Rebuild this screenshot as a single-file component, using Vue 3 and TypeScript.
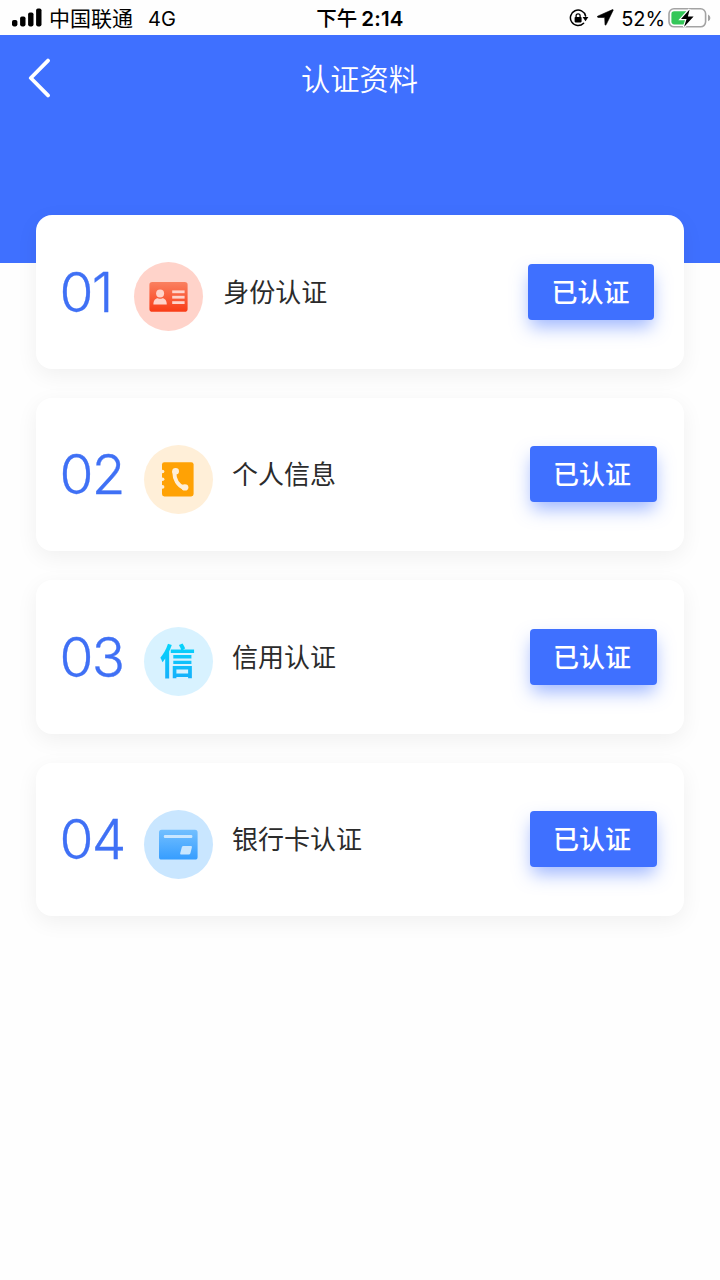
<script setup lang="ts">
type IconKind = 'identity' | 'contacts' | 'credit' | 'bank'

interface Step {
  no: string
  icon: IconKind
  label: string
  status: string
}

const steps: Step[] = [
  { no: '01', icon: 'identity', label: '身份认证', status: '已认证' },
  { no: '02', icon: 'contacts', label: '个人信息', status: '已认证' },
  { no: '03', icon: 'credit', label: '信用认证', status: '已认证' },
  { no: '04', icon: 'bank', label: '银行卡认证', status: '已认证' },
]
</script>

<template>
  <div class="screen">
    <div class="status-bar">
      <div class="side">
        <svg class="signal" width="31" height="20" viewBox="0 0 31 20">
          <rect x="0" y="12" width="5.4" height="6.4" rx="1.8" />
          <rect x="8.1" y="8.4" width="5.4" height="10" rx="1.8" />
          <rect x="16.1" y="4.4" width="5.4" height="14" rx="1.8" />
          <rect x="24.1" y="0.4" width="5.4" height="18" rx="1.8" />
        </svg>
        <span class="carrier">中国联通</span>
        <span class="network">4G</span>
      </div>
      <div class="clock"><span class="period">下午</span><span class="time">2:14</span></div>
      <div class="side side-right">
        <svg class="lock" width="20" height="20" viewBox="0 0 20 20">
          <path d="M14.6 15.2A7.7 7.7 0 1 1 16.6 8" fill="none" stroke="#000" stroke-width="1.5" stroke-linecap="round" />
          <path d="M13.6 9h5.8l-2.9 4.2z" />
          <rect x="5.6" y="9" width="7" height="5.4" rx="0.8" />
          <path d="M7.1 9.4V7.8a2 2 0 0 1 4 0V9.4" fill="none" stroke="#000" stroke-width="1.3" />
        </svg>
        <svg class="arrow" width="17" height="17" viewBox="0 0 17 17">
          <path d="M15.6 0.6 L0.6 7.2 Q-0.1 8.1 1 8.4 L7.7 8.6 L8 15.5 Q8.5 16.8 9.2 15.6 L16.2 1.2 Q16.3 0.5 15.6 0.6z" stroke="#000" stroke-width="0.6" stroke-linejoin="round" />
        </svg>
        <span class="percent">52%</span>
        <svg class="battery" width="43" height="22" viewBox="0 0 43 22">
          <rect x="1" y="1.8" width="36.6" height="18" rx="5" fill="none" stroke="#a3a3a3" stroke-width="1.6" />
          <path d="M40 7.6v6.6q2.4-1.1 2.4-3.3T40 7.6z" fill="#a3a3a3" />
          <rect x="3.4" y="4.2" width="17" height="13.2" rx="2.8" fill="#34c759" />
          <path d="M21.6 2.4 L13 12h5.6L16 20 L25.6 9.6h-5.7z" fill="#000" stroke="#fff" stroke-width="2.4" paint-order="stroke" />
        </svg>
      </div>
    </div>

    <header class="header">
      <svg class="back" width="24" height="40" viewBox="0 0 24 40">
        <path d="M21 2.6 L3.8 20 L21 37.4" fill="none" stroke="#fff" stroke-width="3.8" stroke-linecap="round" stroke-linejoin="round" />
      </svg>
      <h1 class="title">认证资料</h1>
      <span class="header-spacer"></span>
    </header>

    <main class="cards">
      <section v-for="(s, i) in steps" :key="s.no" class="card" :class="{ first: i === 0 }">
        <span class="number">{{ s.no }}</span>
        <div class="icon" :class="s.icon">
          <svg v-if="s.icon === 'identity'" width="69" height="69" viewBox="0 0 69 69">
            <defs>
              <linearGradient id="idFill" x1="0" y1="0" x2="0" y2="1">
                <stop offset="0" stop-color="#fa8060" />
                <stop offset="1" stop-color="#f93c16" />
              </linearGradient>
            </defs>
            <rect x="15.4" y="20.1" width="38.2" height="29.6" rx="2.8" fill="url(#idFill)" />
            <g fill="#ffd3ca">
              <circle cx="26.1" cy="31.4" r="4" />
              <path d="M19.4 42.6c0-4.2 2-6.3 4.4-6.3q2.3 1 4.6 0c2.4 0 4.4 2.1 4.4 6.3z" />
              <rect x="38.2" y="28.4" width="12.4" height="2.8" />
              <rect x="38.2" y="33.8" width="12.4" height="2.8" />
              <rect x="38.2" y="39.2" width="12.4" height="2.8" />
            </g>
          </svg>
          <svg v-else-if="s.icon === 'contacts'" width="69" height="69" viewBox="0 0 69 69">
            <rect x="18" y="17.2" width="31.6" height="34.2" rx="2.4" fill="#ffa205" />
            <g fill="#ffefd8">
              <circle cx="18.6" cy="26.5" r="1.8" />
              <circle cx="18.6" cy="34.2" r="1.8" />
              <circle cx="18.6" cy="41.9" r="1.8" />
            </g>
            <path d="M30.3 27C30.3 34.5 34 40.8 40.5 43" fill="none" stroke="#ffefd8" stroke-width="4" stroke-linecap="round" />
            <ellipse cx="31.6" cy="26.3" rx="3.4" ry="3.2" fill="#ffefd8" />
            <ellipse cx="40.9" cy="42.4" rx="3.5" ry="3.1" fill="#ffefd8" />
          </svg>
          <span v-else-if="s.icon === 'credit'" class="credit-char">信</span>
          <svg v-else width="69" height="69" viewBox="0 0 69 69">
            <defs>
              <linearGradient id="bankFill" x1="0" y1="0" x2="0" y2="1">
                <stop offset="0" stop-color="#72bfff" />
                <stop offset="1" stop-color="#369dff" />
              </linearGradient>
            </defs>
            <rect x="15" y="19.8" width="38.6" height="29.8" rx="2.6" fill="url(#bankFill)" />
            <rect x="19.8" y="25.1" width="28.6" height="2.9" rx="1.2" fill="#c9e6ff" />
            <path d="M39.4 36h7.6q1.2 0 .9 1.2l-1.5 6.1q-.4 1.3-1.7 1.3h-7.6q-1.3 0-.9-1.3l1.6-6.1q.4-1.2 1.6-1.2z" fill="#c9e6ff" />
          </svg>
        </div>
        <span class="label">{{ s.label }}</span>
        <button class="status" type="button">{{ s.status }}</button>
      </section>
    </main>
  </div>
</template>

<style>
body {
  background: #fefefe;
}
</style>

<style scoped>
.screen {
  box-sizing: border-box;
  width: 720px;
  height: 1280px;
  overflow: hidden;
  background: #fefefe;
  font-family: "Inter", "Noto Sans CJK SC", sans-serif;
}
.status-bar {
  display: grid;
  grid-template-columns: 1fr auto 1fr;
  align-items: center;
  height: 35px;
  color: #000;
}
.side {
  display: flex;
  align-items: center;
  height: 35px;
}
.side-right {
  justify-content: flex-end;
}
.signal {
  margin: 0 6px 0 12px;
}
.carrier {
  padding-top: 2px;
  font-size: 21px;
  line-height: 35px;
}
.network {
  margin-left: 15px;
  padding-top: 2px;
  font-size: 20px;
}
.clock {
  display: flex;
  align-items: center;
  font-size: 20.5px;
}
.period {
  padding-top: 3px;
  font-weight: 500;
  line-height: 32px;
}
.time {
  margin-left: 4px;
  padding-top: 2px;
  font-weight: 600;
  letter-spacing: 0.2px;
}
.lock {
  margin: 1px -1px 0 0;
}
.arrow {
  margin-left: 9px;
}
.percent {
  margin-left: 7px;
  padding-top: 2px;
  font-size: 20px;
  letter-spacing: -0.1px;
}
.battery {
  margin: 0 9px 0 3px;
}
.header {
  box-sizing: border-box;
  display: flex;
  align-items: flex-start;
  justify-content: space-between;
  height: 228px;
  padding: 23px 28px 0 27px;
  background: #3f70ff;
}
.header-spacer {
  width: 24px;
}
.title {
  margin: 0;
  color: #fff;
  font-family: "Noto Sans CJK SC", sans-serif;
  font-size: 29.3px;
  font-weight: 350;
  line-height: 38px;
}
.cards {
  display: flex;
  flex-direction: column;
  gap: 29px;
  margin: -48px 36px 0;
}
.card {
  box-sizing: border-box;
  display: flex;
  align-items: center;
  height: 153.5px;
  padding: 0 27px 0 23.5px;
  border-radius: 16px;
  background: #fff;
  box-shadow: 0 6px 22px rgba(0, 0, 0, 0.06);
}
.number {
  width: 84.5px;
  color: #3f70f5;
  font-size: 55px;
  font-weight: 300;
  letter-spacing: -1.6px;
  line-height: 60px;
  -webkit-text-stroke: 0.3px #3f70f5;
}
.icon {
  display: flex;
  align-items: center;
  justify-content: center;
  width: 69px;
  height: 69px;
  margin-top: 10px;
  border-radius: 50%;
}
.icon svg {
  display: block;
}
.identity {
  background: #ffd3ca;
}
.contacts {
  background: #ffefd8;
}
.credit {
  background: #d8f2ff;
}
.bank {
  background: #c9e6ff;
}
.credit-char {
  padding: 0 2px 5px 0;
  background: linear-gradient(#06d6fb 15%, #17aefb 85%);
  background-clip: text;
  color: transparent;
  font-family: "Noto Sans CJK SC", sans-serif;
  font-size: 36px;
  font-weight: 700;
  line-height: 50px;
}
.label {
  margin-left: 19px;
  padding-top: 2px;
  color: #2b2b2b;
  font-size: 26px;
  line-height: 40px;
}
.status {
  width: 127px;
  height: 56px;
  margin-left: auto;
  padding: 2px 3px 0 0;
  border: 0;
  border-radius: 4px;
  background: #3f70ff;
  box-shadow: 0 9px 18px -2px rgba(63, 112, 255, 0.5);
  color: #fff;
  font-family: inherit;
  font-size: 26px;
  font-weight: 500;
  line-height: 54px;
}
.first {
  padding-right: 29.8px;
}
.first .status {
  width: 126.4px;
  padding-right: 1px;
}
.first .number {
  width: 74.2px;
}
.first .label {
  margin-left: 20.6px;
}
</style>
